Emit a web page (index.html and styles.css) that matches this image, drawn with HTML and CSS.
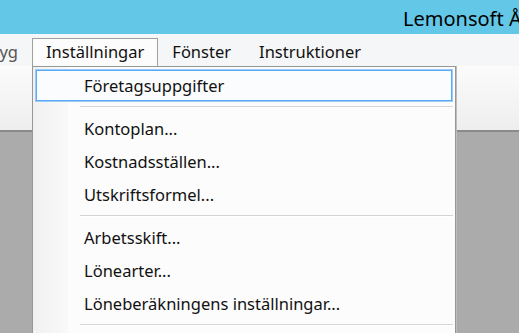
FILE: index.html
```html
<!DOCTYPE html>
<html lang="sv">
<head>
    <meta charset="UTF-8">
    <meta name="viewport" content="width=device-width, initial-scale=1.0">
    <title>Lemonsoft</title>
    <link rel="stylesheet" href="styles.css">
</head>
<body>

    <header class="titlebar">
        <span class="title">Lemonsoft Ånge AB</span>
    </header>

    <nav class="menubar">
        <span class="menu-item first">Verktyg</span>
        <span class="menu-item open">Inställningar</span>
        <span class="menu-item">Fönster</span>
        <span class="menu-item">Instruktioner</span>
    </nav>

    <div class="toolbar"></div>
    <div class="workspace"></div>

    <ul class="dropdown">
        <li class="entry active">Företagsuppgifter</li>
        <li class="separator"></li>
        <li class="entry">Kontoplan...</li>
        <li class="entry">Kostnadsställen...</li>
        <li class="entry">Utskriftsformel...</li>
        <li class="separator"></li>
        <li class="entry">Arbetsskift...</li>
        <li class="entry">Lönearter...</li>
        <li class="entry">Löneberäkningens inställningar...</li>
        <li class="separator"></li>
    </ul>

</body>
</html>
```

FILE: styles.css
```css
body {
    font-family: 'Noto Sans', 'Open Sans', sans-serif;
    margin: 0;
    padding: 0;
    height: 333px;
    overflow: hidden;
    background-color: #ababab;
    color: #111;
    position: relative;
}

.titlebar {
    height: 34px;
    background-color: #63c8e8;
    padding-left: 403px;
    display: flex;
    align-items: center;
    white-space: nowrap;
    overflow: hidden;
}

.title {
    font-size: 20px;
    color: #000;
    padding-top: 2px;
}

.menubar {
    height: 32px;
    background-color: #f5f6f7;
    display: flex;
    align-items: flex-end;
    white-space: nowrap;
}

.menu-item {
    height: 28px;
    line-height: 26px;
    padding: 0 13px;
    font-size: 16.5px;
    border: 1px solid transparent;
    border-bottom: none;
    box-sizing: border-box;
}

.menu-item.first {
    margin-left: -55px;
    color: #555;
}

.menu-item.open {
    border-color: #a0a0a0;
    background-color: #fcfcfc;
}

.toolbar {
    height: 64px;
    background: linear-gradient(#fbfbfb, #eeeeee);
    border-bottom: 2px solid #8a8a8a;
}

.workspace {
    height: 200px;
    background-color: #ababab;
}

.dropdown {
    position: absolute;
    left: 32px;
    top: 66px;
    width: 418px;
    height: 300px;
    margin: 0;
    padding: 2px 2px 0 2px;
    list-style: none;
    border: 1px solid #979797;
    border-bottom: none;
    box-shadow: 1px 0 0 #bdbdbd;
    background: linear-gradient(to right, #f1f1f1, #f9f9f9 35px, #fcfcfc 35px);
}

.entry {
    height: 33px;
    line-height: 31px;
    padding-left: 48px;
    font-size: 16.5px;
    border: 1px solid transparent;
    box-sizing: border-box;
    white-space: nowrap;
}

.entry.active {
    border-color: #9ccbf5;
    box-shadow: inset 0 0 0 1px #58a9f6;
    background-color: #fbfcfe;
}

.separator {
    height: 1px;
    margin: 4px 0 4px 45px;
    background-color: #d5d5d5;
    border-bottom: 1px solid #ffffff;
}
```
